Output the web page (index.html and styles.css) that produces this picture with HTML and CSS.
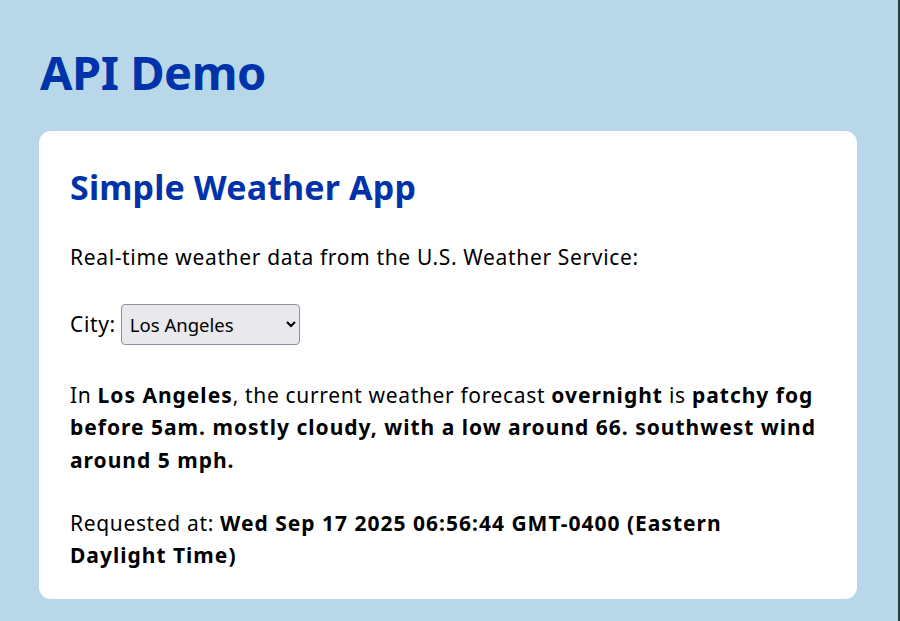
FILE: index.html
```html
<!DOCTYPE html>
<html lang="en">
<head>
<meta charset="utf-8">
<title>API Demo</title>
<link rel="stylesheet" href="styles.css">
</head>
<body>
<div class="page">
  <h1 class="title">API Demo</h1>
  <section class="card">
    <h2 class="card-title">Simple Weather App</h2>
    <p class="text">Real-time weather data from the U.S. Weather Service:</p>
    <div class="city-row">
      <label class="text" for="city">City:</label>
      <select id="city" class="city-select">
        <option>Los Angeles</option>
      </select>
    </div>
    <p class="text">In <b class="strong">Los Angeles</b>, the current weather forecast <b class="strong">overnight</b> is <b class="strong">patchy fog before 5am. mostly cloudy, with a low around 66. southwest wind around 5 mph.</b></p>
    <p class="text">Requested at: <b class="strong">Wed Sep 17 2025 06:56:44 GMT-0400 (Eastern Daylight Time)</b></p>
  </section>
</div>
</body>
</html>
```
FILE: styles.css
```css
html, body {
  margin: 0;
  padding: 0;
  height: 100%;
}
body {
  background: #b8d8ea;
  font-family: "Noto Sans", "Open Sans", sans-serif;
  color: #000;
  overflow: hidden;
}
.page {
  box-sizing: border-box;
  height: 100%;
  padding: 40px 41px 0 39px;
  border-right: 2px solid #2b3a44;
}
.title {
  margin: 0 0 27px 1px;
  font-size: 47px;
  line-height: 64px;
  font-weight: 700;
  color: #0033aa;
  letter-spacing: -0.5px;
}
.card {
  background: #fff;
  border-radius: 12px;
  padding: 34px 36px 27px 31px;
}
.card-title {
  margin: 0 0 32px 0;
  font-size: 34px;
  line-height: 44px;
  font-weight: 700;
  color: #0033aa;
  letter-spacing: 0.15px;
}
.text {
  margin: 0;
  font-size: 21px;
  line-height: 32.5px;
  letter-spacing: 0.65px;
}
.strong {
  font-weight: 700;
  letter-spacing: 1px;
}
.card > .text {
  margin-bottom: 30.5px;
}
.card > .text:last-child {
  margin-bottom: 0;
}
.city-row {
  display: flex;
  align-items: center;
  gap: 5px;
  margin-bottom: 33.5px;
}
.city-select {
  width: 179px;
  height: 41px;
  font-family: inherit;
  font-size: 18.5px;
  background: #e9e9ed;
  border: 1px solid #8f8f9d;
  border-radius: 4px;
  padding: 0 6px 0 4px;
  color: #000;
}
```
